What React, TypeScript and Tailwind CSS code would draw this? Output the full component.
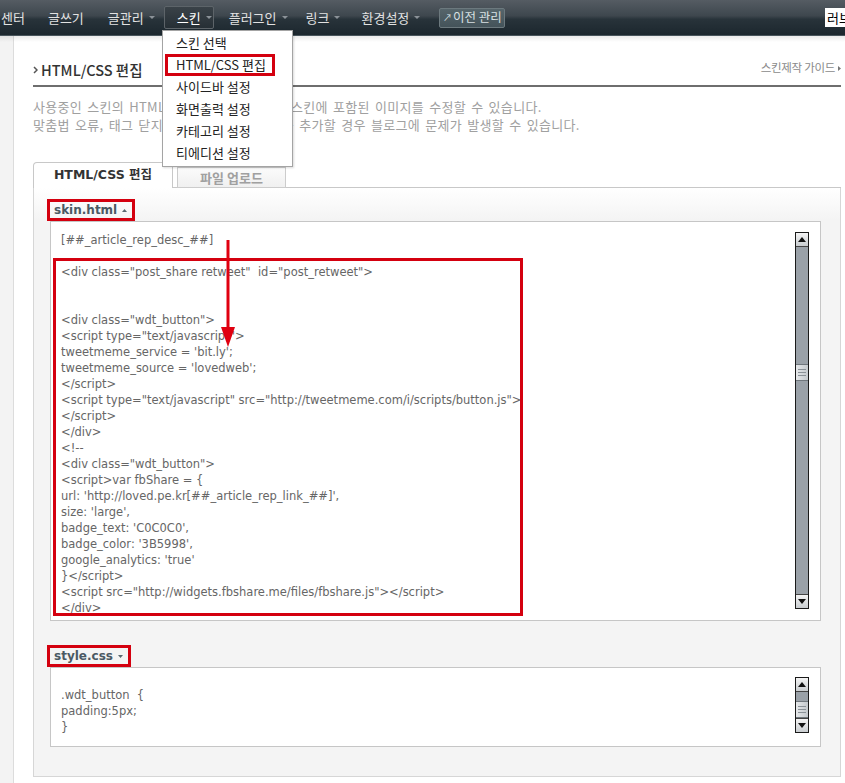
import React from "react";

const skinLines = [
  "[##_article_rep_desc_##]",
  "",
  '<div class="post_share retweet"  id="post_retweet">',
  "",
  "",
  '<div class="wdt_button">',
  '<script type="text/javascript">',
  "tweetmeme_service = 'bit.ly';",
  "tweetmeme_source = 'lovedweb';",
  "</script>",
  '<script type="text/javascript" src="http://tweetmeme.com/i/scripts/button.js">',
  "</script>",
  "</div>",
  "<!--",
  '<div class="wdt_button">',
  "<script>var fbShare = {",
  "url: 'http://loved.pe.kr[##_article_rep_link_##]',",
  "size: 'large',",
  "badge_text: 'C0C0C0',",
  "badge_color: '3B5998',",
  "google_analytics: 'true'",
  "}</script>",
  '<script src="http://widgets.fbshare.me/files/fbshare.js"></script>',
  "</div>",
  "-->",
];

const cssLines = [".wdt_button  {", "padding:5px;", "}"];

function NavArrow() {
  return (
    <span className="ml-[5px] inline-block w-0 h-0 border-l-[3px] border-r-[3px] border-t-[3px] border-l-transparent border-r-transparent border-t-[#8b9298]" />
  );
}

function ScrollBtn({ up }: { up: boolean }) {
  return (
    <div
      className={
        up
          ? "h-[14px] shrink-0 flex items-center justify-center bg-[linear-gradient(to_bottom,#f4f4f4,#c9cdd0)] border-b border-[#444]"
          : "h-[14px] shrink-0 flex items-center justify-center bg-[linear-gradient(to_bottom,#f4f4f4,#c9cdd0)] border-t border-[#444]"
      }
    >
      <svg width="8" height="5" viewBox="0 0 8 5">
        {up ? <polygon points="0,5 8,5 4,0" fill="#111" /> : <polygon points="0,0 8,0 4,5" fill="#111" />}
      </svg>
    </div>
  );
}

function Thumb() {
  return (
    <div className="h-[17px] shrink-0 bg-[linear-gradient(to_right,#e6e8ea,#c4c9cd)] border-y border-[#6f767c] flex flex-col items-center justify-center gap-[2px]">
      <div className="w-[8px] h-px bg-[#8a9197]" />
      <div className="w-[8px] h-px bg-[#8a9197]" />
      <div className="w-[8px] h-px bg-[#8a9197]" />
    </div>
  );
}

function FileLabel({ name, up }: { name: string; up: boolean }) {
  return (
    <div className="ml-[-3px] h-[22px] self-start inline-flex items-center border-[3px] border-[#d4000f] px-[4px] pr-[5px] font-['DejaVu_Sans',sans-serif] font-bold text-[12px] text-[#4a5963]">
      <span>{name}</span>
      <svg className="ml-[5px]" width="5" height="3" viewBox="0 0 5 3">
        {up ? <polygon points="0,3 5,3 2.5,0" fill="#5a6870" /> : <polygon points="0,0 5,0 2.5,3" fill="#5a6870" />}
      </svg>
    </div>
  );
}

export default function App() {
  return (
    <div className="relative w-[845px] h-[783px] overflow-hidden bg-white font-['Noto_Sans_CJK_KR',sans-serif]">
      {/* top navigation */}
      <nav className="h-[36px] flex items-center whitespace-nowrap bg-[linear-gradient(to_bottom,#555c63_0%,#3e474e_45%,#28333a_55%,#1c272e_100%)] border-b border-[#48555c] text-[13px] text-[#e2e2e2]">
        <span className="ml-[1px]">센터</span>
        <span className="ml-[23px]">글쓰기</span>
        <span className="ml-[24px] flex items-center">
          글관리
          <NavArrow />
        </span>
        <span className="ml-[9px] h-[23px] w-[50px] pl-[12px] flex items-center rounded-[2px] border border-[#5d6469] bg-[linear-gradient(to_bottom,#3a4248,#262f35)] text-white">
          스킨
          <NavArrow />
        </span>
        <span className="ml-[15px] flex items-center">
          플러그인
          <NavArrow />
        </span>
        <span className="ml-[18px] flex items-center">
          링크
          <NavArrow />
        </span>
        <span className="ml-[21px] flex items-center">
          환경설정
          <NavArrow />
        </span>
        <span className="ml-[19px] h-[20px] w-[66px] flex items-center justify-center rounded-[2px] border border-[#6c797e] bg-[linear-gradient(to_bottom,#56656b,#44535a)] text-[12.5px] text-[#d8e0e3]">
          <span className="text-[9px] mr-[1px]">↗</span>이전 관리
        </span>
        <span className="ml-auto h-[19px] w-[20px] pl-[2px] flex items-center overflow-hidden bg-white text-[13px] text-black">러브</span>
      </nav>

      <div className="flex h-[747px]">
        <div className="w-[14px] shrink-0 bg-[#f3f3f3] border-r border-[#dcdcdc]" />
        <main className="flex-1 pl-[19px] pr-[4px] flex flex-col">
          {/* header */}
          <div className="pt-[24px] pb-[5px] flex justify-between items-start border-b-2 border-[#6e6e6e]">
            <div className="h-[20px] flex items-center text-[14.5px] leading-[20px] font-medium text-[#333]">
              <svg className="mr-[3px]" width="5" height="8" viewBox="0 0 5 8">
                <polyline points="1,1 4,4 1,7" fill="none" stroke="#555" strokeWidth="1.5" />
              </svg>
              HTML/CSS 편집
            </div>
            <div className="h-[16px] flex items-center text-[11.5px] tracking-[-0.3px] text-[#8a8a8a]">
              스킨제작 가이드
              <svg className="ml-[3px]" width="3" height="5" viewBox="0 0 3 5">
                <polygon points="0,0 3,2.5 0,5" fill="#777" />
              </svg>
            </div>
          </div>

          {/* description */}
          <div className="mt-[11px] text-[13px] leading-[18px] tracking-[0.3px] [word-spacing:2px] text-[#a0a0a0]">
            <p>사용중인 스킨의 HTML과 CSS를 편집하거나 스킨에 포함된 이미지를 수정할 수 있습니다.</p>
            <p>맞춤법 오류, 태그 닫지 않음 등 잘못된 코드를 추가할 경우 블로그에 문제가 발생할 수 있습니다.</p>
          </div>

          {/* tabs */}
          <div className="mt-[28px] h-[26px] flex items-end">
            <div className="h-[26px] w-[140px] flex items-center justify-center rounded-tl-[4px] border-l border-t border-r border-[#c8c8c8] bg-white font-['DejaVu_Sans','Noto_Sans_CJK_KR',sans-serif] text-[12.5px] font-bold text-[#333]">
              HTML/CSS 편집
            </div>
            <div className="w-[4px] h-full border-b border-[#c8c8c8]" />
            <div className="h-[21px] w-[109px] flex items-center justify-center border border-[#cccccc] bg-[linear-gradient(to_bottom,#fbfbfb,#f0f0f0)] text-[13px] font-bold text-[#a0a0a0]">
              파일 업로드
            </div>
            <div className="flex-1 h-full border-b border-[#c8c8c8]" />
          </div>

          {/* panel */}
          <div className="flex flex-col pt-[11px] pl-[16px] pr-[19px] pb-[29px] border-l border-r border-b border-[#d6d6d6] bg-[linear-gradient(to_bottom,#ffffff,#f4f4f4_32px)]">
            <FileLabel name="skin.html" up={true} />
            <div className="relative h-[400px] flex border border-[#c6c6c6] bg-white">
              <div className="flex-1 h-full overflow-hidden pl-[10px] pt-[10px] font-['DejaVu_Sans',sans-serif] text-[11.5px] leading-[16px] text-[#666]">
                {skinLines.map((l, i) => (
                  <div key={i} className="h-[16px] whitespace-pre">
                    {l === "" ? "\u00a0" : l}
                  </div>
                ))}
              </div>
              <div className="mt-[10px] mr-[11px] h-[377px] w-[14px] shrink-0 flex flex-col border border-[#1a1a1a] bg-[#9aa1a8]">
                <ScrollBtn up={true} />
                <div className="h-[117px] shrink-0" />
                <Thumb />
                <div className="flex-1" />
                <ScrollBtn up={false} />
              </div>
              {/* annotation box */}
              <div className="absolute left-[2px] top-[36px] w-[470px] h-[358px] border-[3px] border-[#d4000f]" />
              {/* annotation arrow */}
              <svg className="absolute left-[168px] top-[18px]" width="18" height="110" viewBox="0 0 18 110">
                <line x1="9" y1="0" x2="9" y2="90" stroke="#e00010" strokeWidth="3" />
                <polygon points="2,87 16,87 9,107" fill="#e00010" />
              </svg>
            </div>

            <div className="mt-[24px] flex flex-col">
              <FileLabel name="style.css" up={false} />
            </div>
            <div className="h-[80px] flex border border-[#c6c6c6] bg-white">
              <div className="flex-1 h-full overflow-hidden pl-[10px] pt-[19px] font-['DejaVu_Sans',sans-serif] text-[11.5px] leading-[16px] text-[#666]">
                {cssLines.map((l, i) => (
                  <div key={i} className="h-[16px] whitespace-pre">
                    {l}
                  </div>
                ))}
              </div>
              <div className="mt-[9px] mr-[11px] h-[56px] w-[14px] shrink-0 flex flex-col border border-[#1a1a1a] bg-[#9aa1a8]">
                <ScrollBtn up={true} />
                <div className="h-[9px] shrink-0" />
                <Thumb />
                <div className="flex-1" />
                <ScrollBtn up={false} />
              </div>
            </div>
          </div>
        </main>
      </div>

      {/* shadow under nav */}
      <div className="absolute left-0 right-0 top-[36px] h-[6px] bg-[linear-gradient(to_bottom,rgba(0,0,0,0.08),rgba(0,0,0,0))] pointer-events-none" />

      {/* dropdown menu */}
      <div className="absolute left-[162px] top-[30px] w-[131px] h-[137px] pt-[1px] border border-[#a4a4a4] bg-white shadow-[1px_1px_2px_rgba(0,0,0,0.15)] text-[13px] leading-[22px] text-[#222]">
        <div className="h-[22px] pl-[13px]">스킨 선택</div>
        <div className="h-[22px] ml-[2px] w-[110px] pl-[8px] border-[3px] border-[#d4000f] leading-[16px] flex items-center">HTML/CSS 편집</div>
        <div className="h-[22px] pl-[13px]">사이드바 설정</div>
        <div className="h-[22px] pl-[13px]">화면출력 설정</div>
        <div className="h-[22px] pl-[13px]">카테고리 설정</div>
        <div className="h-[22px] pl-[13px]">티에디션 설정</div>
      </div>
    </div>
  );
}
